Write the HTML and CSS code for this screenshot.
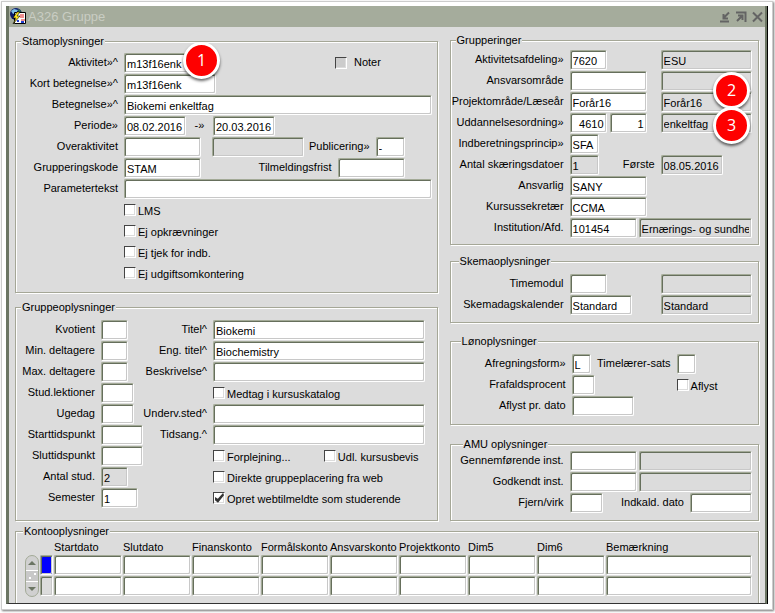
FILE: index.html
```html
<!DOCTYPE html>
<html lang="da">
<head>
  <meta charset="UTF-8">
  <meta name="viewport" content="width=device-width,initial-scale=1.0">
  <title>A326 Gruppe</title>
  <link rel="stylesheet" href="styles.css">
</head>
<body>

<div class="sheet">
  <div class="window">

    <header class="titlebar">
      <svg class="app_icon" width="17" height="17" viewBox="0 0 17 17">
        <circle cx="7" cy="6" r="6" fill="#0a1a6a"/>
        <path d="M2 3l3-2 4 1-2 3-3 1z" fill="#7cc0e8"/>
        <path d="M9 1l3 2-2 2z" fill="#2c8a4a"/>
        <path d="M5.500 4.500h11v11h-11z" fill="#fff" stroke="#000"/>
        <path d="M11 7h4M11 9h4M12 12h4" stroke="#e02020"/>
        <path d="M8 13h2M12 14h3" stroke="#2040d0" stroke-width="2"/>
        <path d="M8 4L4 10h3l-3 6 7-8H8l3-4z" fill="#ffe820" stroke="#000" stroke-width=".6"/>
      </svg>
      <h1>A326 Gruppe</h1>
      <div class="window_buttons">
        <button type="button" aria-label="Minimer">
          <svg width="12" height="12" viewBox="0 0 12 12"><path d="M1 10.500h9M10 1.500L5 6.500M4.500 3v4.500H9" /></svg>
        </button>
        <button type="button" aria-label="Gendan">
          <svg width="12" height="12" viewBox="0 0 12 12"><path d="M1 1.500h9.500V11M2 10l5-5M3 4.500h4.500V9" /></svg>
        </button>
        <button type="button" aria-label="Luk">
          <svg width="12" height="12" viewBox="0 0 12 12"><path d="M2 1.500l9 9M11 1.500l-9 9" stroke-width="2.400" /></svg>
        </button>
      </div>
    </header>

    <form class="content">
      <div class="columns">

        <div class="column column_left">

          <!-- Stamoplysninger -->
          <fieldset class="stam">
            <legend>Stamoplysninger</legend>
            <div class="row">
              <label class="lead" for="aktivitet">Aktivitet»^</label>
              <span class="marked">
                <input type="text" id="aktivitet" class="w77" value="m13f16enk">
                <span class="badge badge_1">1</span>
              </span>
              <label class="check noter"><input type="checkbox" disabled><span>Noter</span></label>
            </div>
            <div class="row">
              <label class="lead" for="kort">Kort betegnelse»^</label>
              <input type="text" id="kort" class="w92" value="m13f16enk">
            </div>
            <div class="row">
              <label class="lead" for="betegnelse">Betegnelse»^</label>
              <input type="text" id="betegnelse" class="fill" value="Biokemi enkeltfag">
            </div>
            <div class="row">
              <label class="lead" for="periode">Periode»</label>
              <input type="text" id="periode" class="w62" value="08.02.2016">
              <label class="arrow" for="periode_slut">-»</label>
              <input type="text" id="periode_slut" class="w62" value="20.03.2016">
            </div>
            <div class="row short">
              <label class="lead" for="over">Overaktivitet</label>
              <input type="text" id="over" class="w77">
              <input type="text" class="w92 over_navn" aria-label="Overaktivitet navn" readonly>
              <label class="push" for="publicering">Publicering»</label>
              <input type="text" id="publicering" class="w29" value="-">
            </div>
            <div class="row short">
              <label class="lead" for="kode">Grupperingskode</label>
              <input type="text" id="kode" class="w77" value="STAM">
              <label class="push" for="frist">Tilmeldingsfrist</label>
              <input type="text" id="frist" class="w67">
            </div>
            <div class="row">
              <label class="lead" for="parameter">Parametertekst</label>
              <input type="text" id="parameter" class="fill">
            </div>
            <div class="row checks"><label class="check"><input type="checkbox"><span>LMS</span></label></div>
            <div class="row checks"><label class="check"><input type="checkbox"><span>Ej opkrævninger</span></label></div>
            <div class="row checks"><label class="check"><input type="checkbox"><span>Ej tjek for indb.</span></label></div>
            <div class="row checks"><label class="check"><input type="checkbox"><span>Ej udgiftsomkontering</span></label></div>
          </fieldset>

          <!-- Gruppeoplysninger -->
          <fieldset class="gruppe">
            <legend>Gruppeoplysninger</legend>
            <div class="gruppe_grid">
              <div class="gruppe_tal">
                <div class="row"><label class="lead" for="kvotient">Kvotient</label><input type="text" id="kvotient" class="w27"></div>
                <div class="row"><label class="lead" for="min">Min. deltagere</label><input type="text" id="min" class="w27"></div>
                <div class="row"><label class="lead" for="max">Max. deltagere</label><input type="text" id="max" class="w27"></div>
                <div class="row"><label class="lead" for="lektioner">Stud.lektioner</label><input type="text" id="lektioner" class="w33"></div>
                <div class="row"><label class="lead" for="ugedag">Ugedag</label><input type="text" id="ugedag" class="w33"></div>
                <div class="row"><label class="lead" for="start">Starttidspunkt</label><input type="text" id="start" class="w42"></div>
                <div class="row"><label class="lead" for="slut">Sluttidspunkt</label><input type="text" id="slut" class="w42"></div>
                <div class="row"><label class="lead" for="antal">Antal stud.</label><input type="text" id="antal" class="w27" value="2" readonly></div>
                <div class="row"><label class="lead" for="semester">Semester</label><input type="text" id="semester" class="w37" value="1"></div>
              </div>
              <div class="gruppe_tekst">
                <div class="row"><label class="lead" for="titel">Titel^</label><input type="text" id="titel" class="fill" value="Biokemi"></div>
                <div class="row"><label class="lead" for="eng">Eng. titel^</label><input type="text" id="eng" class="fill" value="Biochemistry"></div>
                <div class="row"><label class="lead" for="beskrivelse">Beskrivelse^</label><input type="text" id="beskrivelse" class="fill"></div>
                <div class="row checks"><label class="check"><input type="checkbox"><span>Medtag i kursuskatalog</span></label></div>
                <div class="row"><label class="lead" for="sted">Underv.sted^</label><input type="text" id="sted" class="fill"></div>
                <div class="row"><label class="lead" for="tidsang">Tidsang.^</label><input type="text" id="tidsang" class="fill"></div>
                <div class="row checks">
                  <label class="check"><input type="checkbox"><span>Forplejning...</span></label>
                  <label class="check push"><input type="checkbox"><span>Udl. kursusbevis</span></label>
                </div>
                <div class="row checks"><label class="check"><input type="checkbox"><span>Direkte gruppeplacering fra web</span></label></div>
                <div class="row checks"><label class="check"><input type="checkbox" checked><span>Opret webtilmeldte som studerende</span></label></div>
              </div>
            </div>
          </fieldset>
        </div>

        <div class="column column_right">

          <!-- Grupperinger -->
          <fieldset class="grupperinger">
            <legend>Grupperinger</legend>
            <div class="row">
              <label class="lead" for="afdeling">Aktivitetsafdeling»</label>
              <span class="code"><input type="text" id="afdeling" class="w37" value="7620"></span>
              <input type="text" class="fill" aria-label="Afdeling navn" value="ESU" readonly>
            </div>
            <div class="row">
              <label class="lead" for="ansvar">Ansvarsområde</label>
              <span class="code"><input type="text" id="ansvar" class="w77"></span>
              <input type="text" class="fill" aria-label="Ansvarsområde navn" readonly>
            </div>
            <div class="row">
              <label class="lead" for="projekt">Projektområde/Læseår</label>
              <span class="code"><input type="text" id="projekt" class="w77" value="Forår16"></span>
              <span class="marked fill">
                <input type="text" class="fill" aria-label="Projektområde navn" value="Forår16" readonly>
                <span class="badge badge_2">2</span>
              </span>
            </div>
            <div class="row">
              <label class="lead" for="ordning">Uddannelsesordning»</label>
              <span class="code">
                <input type="text" id="ordning" class="w37 number" value="4610">
                <input type="text" class="w37 number" aria-label="Version" value="1">
              </span>
              <span class="marked fill">
                <input type="text" class="fill" aria-label="Ordning navn" value="enkeltfag" readonly>
                <span class="badge badge_3">3</span>
              </span>
            </div>
            <div class="row">
              <label class="lead" for="princip">Indberetningsprincip»</label>
              <input type="text" id="princip" class="w29" value="SFA">
            </div>
            <div class="row">
              <label class="lead" for="skaering">Antal skæringsdatoer</label>
              <span class="code">
                <input type="text" id="skaering" class="w29" value="1" readonly>
                <label class="push" for="foerste">Første</label>
              </span>
              <input type="text" id="foerste" class="w62" value="08.05.2016" readonly>
            </div>
            <div class="row">
              <label class="lead" for="ansvarlig">Ansvarlig</label>
              <input type="text" id="ansvarlig" class="w77" value="SANY">
            </div>
            <div class="row">
              <label class="lead" for="sekretaer">Kursussekretær</label>
              <input type="text" id="sekretaer" class="w77" value="CCMA">
            </div>
            <div class="row pair">
              <label class="lead" for="institution">Institution/Afd.</label>
              <input type="text" id="institution" class="w67" value="101454">
              <input type="text" class="fill" aria-label="Institution navn" value="Ernærings- og sundhedsuddannelsen" readonly>
            </div>
          </fieldset>

          <!-- Skemaoplysninger -->
          <fieldset class="skema">
            <legend>Skemaoplysninger</legend>
            <div class="row">
              <label class="lead" for="timemodul">Timemodul</label>
              <span class="code"><input type="text" id="timemodul" class="w37"></span>
              <input type="text" class="fill" aria-label="Timemodul navn" readonly>
            </div>
            <div class="row">
              <label class="lead" for="kalender">Skemadagskalender</label>
              <span class="code"><input type="text" id="kalender" class="w62" value="Standard"></span>
              <input type="text" class="fill" aria-label="Kalender navn" value="Standard" readonly>
            </div>
          </fieldset>

          <!-- Lønoplysninger -->
          <fieldset class="loen">
            <legend>Lønoplysninger</legend>
            <div class="row">
              <label class="lead" for="afregning">Afregningsform»</label>
              <span class="code">
                <input type="text" id="afregning" class="w19" value="L">
                <label class="push" for="sats">Timelærer-sats</label>
              </span>
              <input type="text" id="sats" class="w19">
            </div>
            <div class="row">
              <label class="lead" for="frafald">Frafaldsprocent</label>
              <span class="code"><input type="text" id="frafald" class="w23"></span>
              <label class="check"><input type="checkbox"><span>Aflyst</span></label>
            </div>
            <div class="row">
              <label class="lead" for="aflyst_dato">Aflyst pr. dato</label>
              <input type="text" id="aflyst_dato" class="w62">
            </div>
          </fieldset>

          <!-- AMU oplysninger -->
          <fieldset class="amu">
            <legend>AMU oplysninger</legend>
            <div class="row pair">
              <label class="lead" for="gennem">Gennemførende inst.</label>
              <input type="text" id="gennem" class="w67">
              <input type="text" class="fill" aria-label="Gennemførende navn" readonly>
            </div>
            <div class="row pair">
              <label class="lead" for="godkendt">Godkendt inst.</label>
              <input type="text" id="godkendt" class="w67">
              <input type="text" class="fill" aria-label="Godkendt navn" readonly>
            </div>
            <div class="row">
              <label class="lead" for="fjern">Fjern/virk</label>
              <input type="text" id="fjern" class="w33">
              <label class="push" for="indkald">Indkald. dato</label>
              <input type="text" id="indkald" class="w62">
            </div>
          </fieldset>
        </div>
      </div>

      <!-- Kontooplysninger -->
      <fieldset class="konto">
        <legend>Kontooplysninger</legend>
        <div class="konto_body">
          <div class="scroller">
            <button type="button" class="up" aria-label="Op"></button>
            <span class="thumb"></span>
            <button type="button" class="down" aria-label="Ned"></button>
          </div>
          <table>
            <colgroup>
              <col class="col_mark"><col class="col_konto"><col class="col_konto"><col class="col_konto"><col class="col_konto"><col class="col_konto"><col class="col_konto"><col class="col_konto"><col class="col_konto"><col>
            </colgroup>
            <thead>
              <tr>
                <td></td>
                <th>Startdato</th>
                <th>Slutdato</th>
                <th>Finanskonto</th>
                <th>Formålskonto</th>
                <th>Ansvarskonto</th>
                <th>Projektkonto</th>
                <th>Dim5</th>
                <th>Dim6</th>
                <th>Bemærkning</th>
              </tr>
            </thead>
            <tbody>
              <tr>
                <td><input type="text" class="current" aria-label="Aktuel række" readonly></td>
                <td><input type="text" aria-label="Startdato 1"></td>
                <td><input type="text" aria-label="Slutdato 1"></td>
                <td><input type="text" aria-label="Finanskonto 1"></td>
                <td><input type="text" aria-label="Formålskonto 1"></td>
                <td><input type="text" aria-label="Ansvarskonto 1"></td>
                <td><input type="text" aria-label="Projektkonto 1"></td>
                <td><input type="text" aria-label="Dim5 1"></td>
                <td><input type="text" aria-label="Dim6 1"></td>
                <td><input type="text" aria-label="Bemærkning 1"></td>
              </tr>
              <tr>
                <td><input type="text" aria-label="Række 2" readonly></td>
                <td><input type="text" aria-label="Startdato 2"></td>
                <td><input type="text" aria-label="Slutdato 2"></td>
                <td><input type="text" aria-label="Finanskonto 2"></td>
                <td><input type="text" aria-label="Formålskonto 2"></td>
                <td><input type="text" aria-label="Ansvarskonto 2"></td>
                <td><input type="text" aria-label="Projektkonto 2"></td>
                <td><input type="text" aria-label="Dim5 2"></td>
                <td><input type="text" aria-label="Dim6 2"></td>
                <td><input type="text" aria-label="Bemærkning 2"></td>
              </tr>
            </tbody>
          </table>
        </div>
      </fieldset>
    </form>
  </div>
</div>

</body>
</html>
```
FILE: styles.css
```css
* {
  box-sizing: border-box;
}

body {
  margin: 0;
  padding: 1px 2px 3px 1px;
  background: #fff;
  color: #000;
  font-family: "Liberation Sans", Arial, sans-serif;
  font-size: 11px;
}

/* ========================== */
/* Vindue */
/* ========================== */

.sheet {
  padding: 4px 4px 5px;
  border: 1px solid #ccc;
  background: #fff;
  box-shadow: 1px 1px 2px #777;
}

.window {
  border: solid #6b7563;
  border-width: 0 2px 0 3px;
  border-bottom: 1px solid #333;
  box-shadow: 1px 0 0 #000;
  margin-right: 1px;
  background: #dcdcdc;
}

.titlebar {
  display: flex;
  align-items: center;
  height: 21px;
  background: #a5ac9c;
}

.titlebar h1 {
  flex: 1;
  margin: 0 0 0 2px;
  color: #c9cdc3;
  font-size: 13px;
  font-weight: normal;
}

.window_buttons {
  display: flex;
  gap: 4px;
  padding-right: 2px;
}

.window_buttons button {
  display: flex;
  padding: 0;
  border: none;
  background: none;
}

.window_buttons path {
  fill: none;
  stroke: #646464;
  stroke-width: 2;
}

.content {
  padding: 7px 6px 0;
}

.columns {
  display: grid;
  grid-template-columns: 422fr 309fr;
  gap: 12px;
}

.column {
  min-width: 0;
}

.column_left {
  padding-top: 1px;
}

/* ========================== */
/* Rammer */
/* ========================== */

fieldset {
  min-width: 0;
  margin: 0;
  padding: 0;
  border: 1px solid #a5a797;
  box-shadow: 1px 1px 0 #fff, inset 1px 1px 0 #fff;
}

legend {
  height: 13px;
  margin-left: 5px;
  padding: 0 1px;
  background: #dcdcdc;
  line-height: 13px;
}

.stam {
  padding: 5px 5px 8px 0;
  margin-bottom: 8px;
}

.gruppe {
  padding: 6px 12px 11px 0;
}

.grupperinger {
  padding: 3px 6px 5px 0;
  margin-bottom: 10px;
}

.skema {
  padding: 6px 6px 6px 0;
  margin-bottom: 12px;
}

.skema legend {
  margin-left: 8px;
}

.loen {
  padding: 6px 6px 7px 0;
  margin-bottom: 13px;
}

.loen legend {
  margin-left: 10px;
}

.amu {
  padding: 0 6px 6px 0;
}

.amu legend {
  margin-left: 12px;
}

/* ========================== */
/* Rækker og felter */
/* ========================== */

.row {
  display: flex;
  height: 20px;
  margin-bottom: 1px;
}

.row label {
  line-height: 18px;
  white-space: nowrap;
}

.row .lead {
  flex: none;
  display: flex;
  justify-content: flex-end;
  margin-right: 6px;
}

.stam .lead {
  width: 102px;
}

.gruppe_grid {
  display: grid;
  grid-template-columns: 127px 1fr;
}

.gruppe_tal .lead {
  width: 79px;
}

.gruppe_tekst .lead {
  width: 64px;
}

.column_right .lead {
  width: 113px;
}

.column_right .loen .lead {
  width: 115px;
}

input[type="text"] {
  flex: none;
  min-width: 0;
  height: 20px;
  padding: 2px 2px 0 2px;
  border: 1px solid;
  border-color: #a3aa97 #fff #fff #a3aa97;
  border-radius: 2px;
  background: #fff;
  box-shadow: inset 1px 1px 0 #666f5c, inset -1px -1px 0 #c8c8c8;
  color: #000;
  font: inherit;
}

input[type="text"]:read-only {
  background: #dcdcdc;
}

.w19 { width: 19px; }
.w23 { width: 23px; }
.w27 { width: 27px; }
.w29 { width: 29px; }
.w33 { width: 33px; }
.w37 { width: 37px; }
.w42 { width: 42px; }
.w62 { width: 62px; }
.w67 { width: 67px; }
.w77 { width: 77px; }
.w92 { width: 92px; }

input[type="text"].fill,
.fill {
  flex: 1;
}

input[type="text"].number {
  text-align: right;
}

.code {
  flex: none;
  display: flex;
  gap: 3px;
  width: 91px;
}

.loen .code {
  width: 105px;
}

.pair {
  gap: 2px;
}

.row.pair .lead {
  margin-right: 4px;
}

.push {
  margin-left: auto;
  margin-right: 6px;
}

.arrow {
  width: 27px;
  text-align: center;
}

.short {
  padding-right: 27px;
}

.over_navn {
  margin-left: 11px;
}

/* ========================== */
/* Afkrydsning */
/* ========================== */

.check {
  display: flex;
  align-items: flex-start;
}

.row .check {
  line-height: 22px;
}

.stam .checks {
  padding-left: 108px;
}

.gruppe .checks {
  padding-left: 70px;
}

.check input {
  position: relative;
  width: 12px;
  height: 12px;
  margin: 4px 2px 0 0;
  border: 1px solid;
  border-color: #444 #fff #fff #444;
  background: #fff;
  box-shadow: inset -1px -1px 0 #dcdcdc;
  appearance: none;
}

.check input:disabled {
  background: #ccc;
}

.check input:checked::after {
  content: "";
  position: absolute;
  inset: 0;
  background: #333;
  clip-path: polygon(10% 40%, 38% 58%, 90% 0, 100% 22%, 40% 98%, 10% 72%);
}

.noter {
  margin-left: 134px;
}

.noter span {
  margin-left: 5px;
  line-height: 18px;
}

/* ========================== */
/* Røde mærker */
/* ========================== */

.marked {
  position: relative;
  display: flex;
  min-width: 0;
}

.badge {
  position: absolute;
  z-index: 1;
  width: 37px;
  height: 37px;
  border: 3px solid #fff;
  border-radius: 50%;
  background: #fe0000;
  box-shadow: 0 2px 3px rgba(0, 0, 0, 0.6);
  color: #fff;
  font: 16px/30px "Open Sans", sans-serif;
  text-align: center;
}

.badge_1 {
  top: -11px;
  left: 59px;
}

.badge_2 {
  top: -20px;
  right: 2px;
}

.badge_3 {
  top: -6px;
  right: 2px;
}

/* ========================== */
/* Kontooplysninger */
/* ========================== */

.konto {
  margin-top: 4px;
  padding: 2px 5px 6px 9px;
  border-bottom: none;
  box-shadow: inset 1px 1px 0 #fff, 1px 0 0 #fff;
}

.konto legend {
  margin-left: -2px;
}

.konto_body {
  display: flex;
  align-items: flex-end;
}

.konto table {
  flex: 1;
  table-layout: fixed;
  width: 100%;
  border-collapse: collapse;
}

.col_mark {
  width: 14px;
}

.col_konto {
  width: 69px;
}

.konto th,
.konto td {
  padding: 0 1px 1px 0;
}

.konto th {
  height: 15px;
  padding: 0;
  font-weight: normal;
  line-height: 15px;
  text-align: left;
  white-space: nowrap;
}

.konto td input {
  display: block;
  width: 100%;
}

.konto input[type="text"].current {
  background: #0000fe;
}

.scroller {
  display: flex;
  flex-direction: column;
  width: 14px;
  height: 42px;
  margin-right: 1px;
  border: 1px solid #a3aa97;
  border-radius: 7px;
  background: #d0d0d0;
}

.scroller button {
  flex: 1;
  display: flex;
  align-items: center;
  justify-content: center;
  padding: 0;
  border: none;
  background: none;
}

.scroller button::before {
  content: "";
  border: solid transparent;
  border-width: 0 4px;
}

.scroller .up::before {
  border-bottom: 4px solid #6b7563;
}

.scroller .down::before {
  border-top: 4px solid #6b7563;
}

.thumb {
  height: 12px;
  border: solid #fff;
  border-width: 1px 0;
  background: radial-gradient(circle at 9px 3px, #fff 1px, transparent 1px), radial-gradient(circle at 4px 7px, #fff 1px, transparent 1px), #c8c8c8;
}
```
